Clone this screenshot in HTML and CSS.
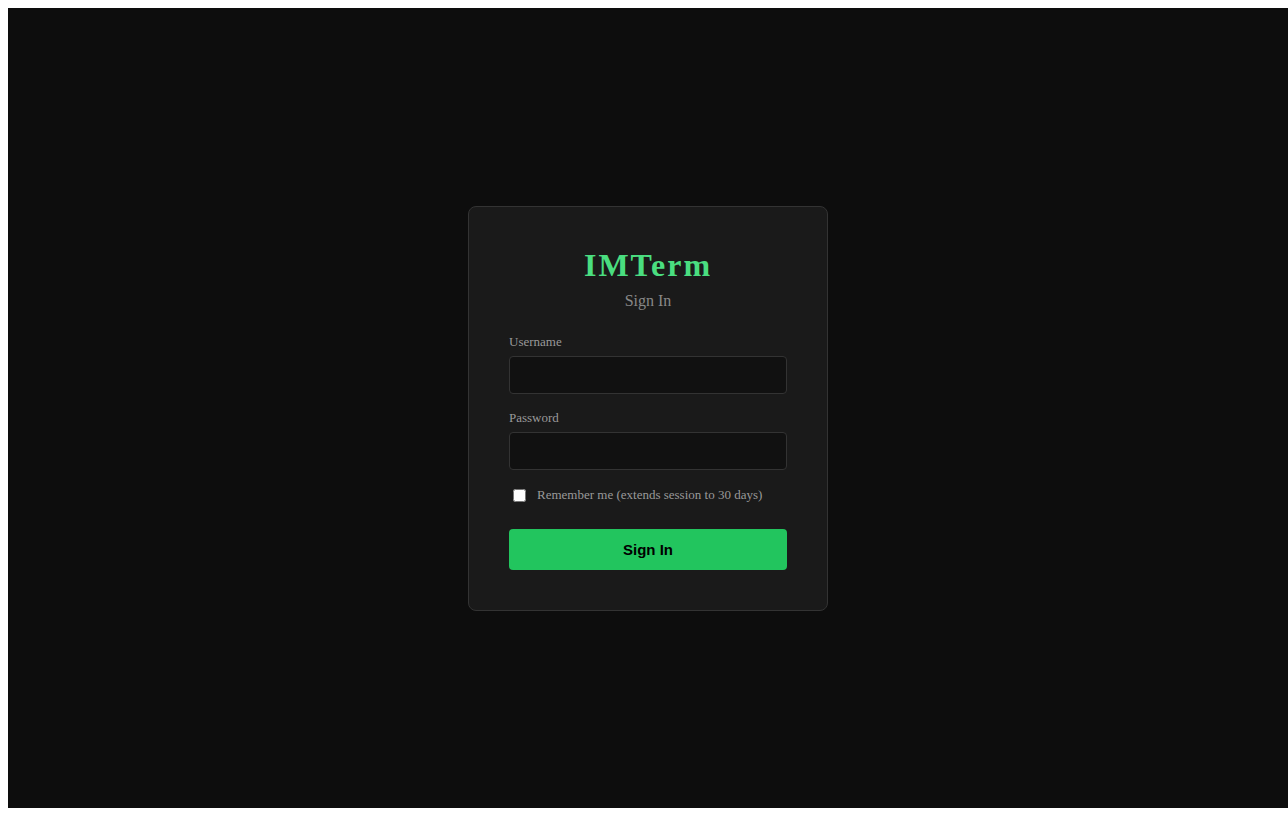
FILE: index.html
```html
<!DOCTYPE html>
<html lang="en">
<head>
  <meta charset="UTF-8">
  <meta name="viewport" content="width=device-width, initial-scale=1.0">
  <title>IMTerm - Sign In</title>
  <link rel="stylesheet" href="styles.css">
</head>
<body>
  <div class="page">
    <div class="login-card">
      <h1 class="brand">IMTerm</h1>
      <p class="subtitle">Sign In</p>

      <form class="login-form">
        <div class="form-group">
          <label for="username">Username</label>
          <input type="text" id="username" name="username">
        </div>

        <div class="form-group">
          <label for="password">Password</label>
          <input type="password" id="password" name="password">
        </div>

        <label class="remember">
          <input type="checkbox" name="remember">
          <span>Remember me (extends session to 30 days)</span>
        </label>

        <button type="submit">Sign In</button>
      </form>
    </div>
  </div>
</body>
</html>
```

FILE: styles.css
```css
body {
  margin: 8px 0 8px 8px;
  font-family: 'Liberation Serif', 'Times New Roman', serif;
}

.page {
  width: 1280px;
  height: 800px;
  background-color: #0d0d0d;
  display: flex;
  align-items: center;
  justify-content: center;
}

.login-card {
  width: 360px;
  box-sizing: border-box;
  padding: 40px;
  background-color: #1a1a1a;
  border: 1px solid #333;
  border-radius: 8px;
}

.brand {
  margin: 0 0 8px;
  font-size: 32px;
  font-weight: bold;
  letter-spacing: 2px;
  text-align: center;
  color: #4ade80;
}

.subtitle {
  margin: 0 0 24px;
  font-size: 16px;
  text-align: center;
  color: #888;
}

.login-form {
  display: flex;
  flex-direction: column;
}

.form-group {
  margin-bottom: 16px;
}

.form-group label {
  display: block;
  margin-bottom: 6px;
  font-size: 13px;
  color: #999;
}

.form-group input {
  display: block;
  width: 100%;
  box-sizing: border-box;
  height: 38px;
  padding: 10px;
  font-size: 14px;
  background-color: #111;
  border: 1px solid #333;
  border-radius: 4px;
  color: #e0e0e0;
  outline: none;
}

.remember {
  display: flex;
  align-items: center;
  gap: 8px;
  font-size: 13px;
  color: #999;
  cursor: pointer;
}

.remember input {
  margin: 3px 3px 3px 4px;
}

button {
  margin-top: 24px;
  padding: 12px;
  font-family: 'Liberation Sans', Arial, sans-serif;
  font-size: 15px;
  font-weight: bold;
  color: #000;
  background-color: #22c55e;
  border: none;
  border-radius: 4px;
  cursor: pointer;
}
```
